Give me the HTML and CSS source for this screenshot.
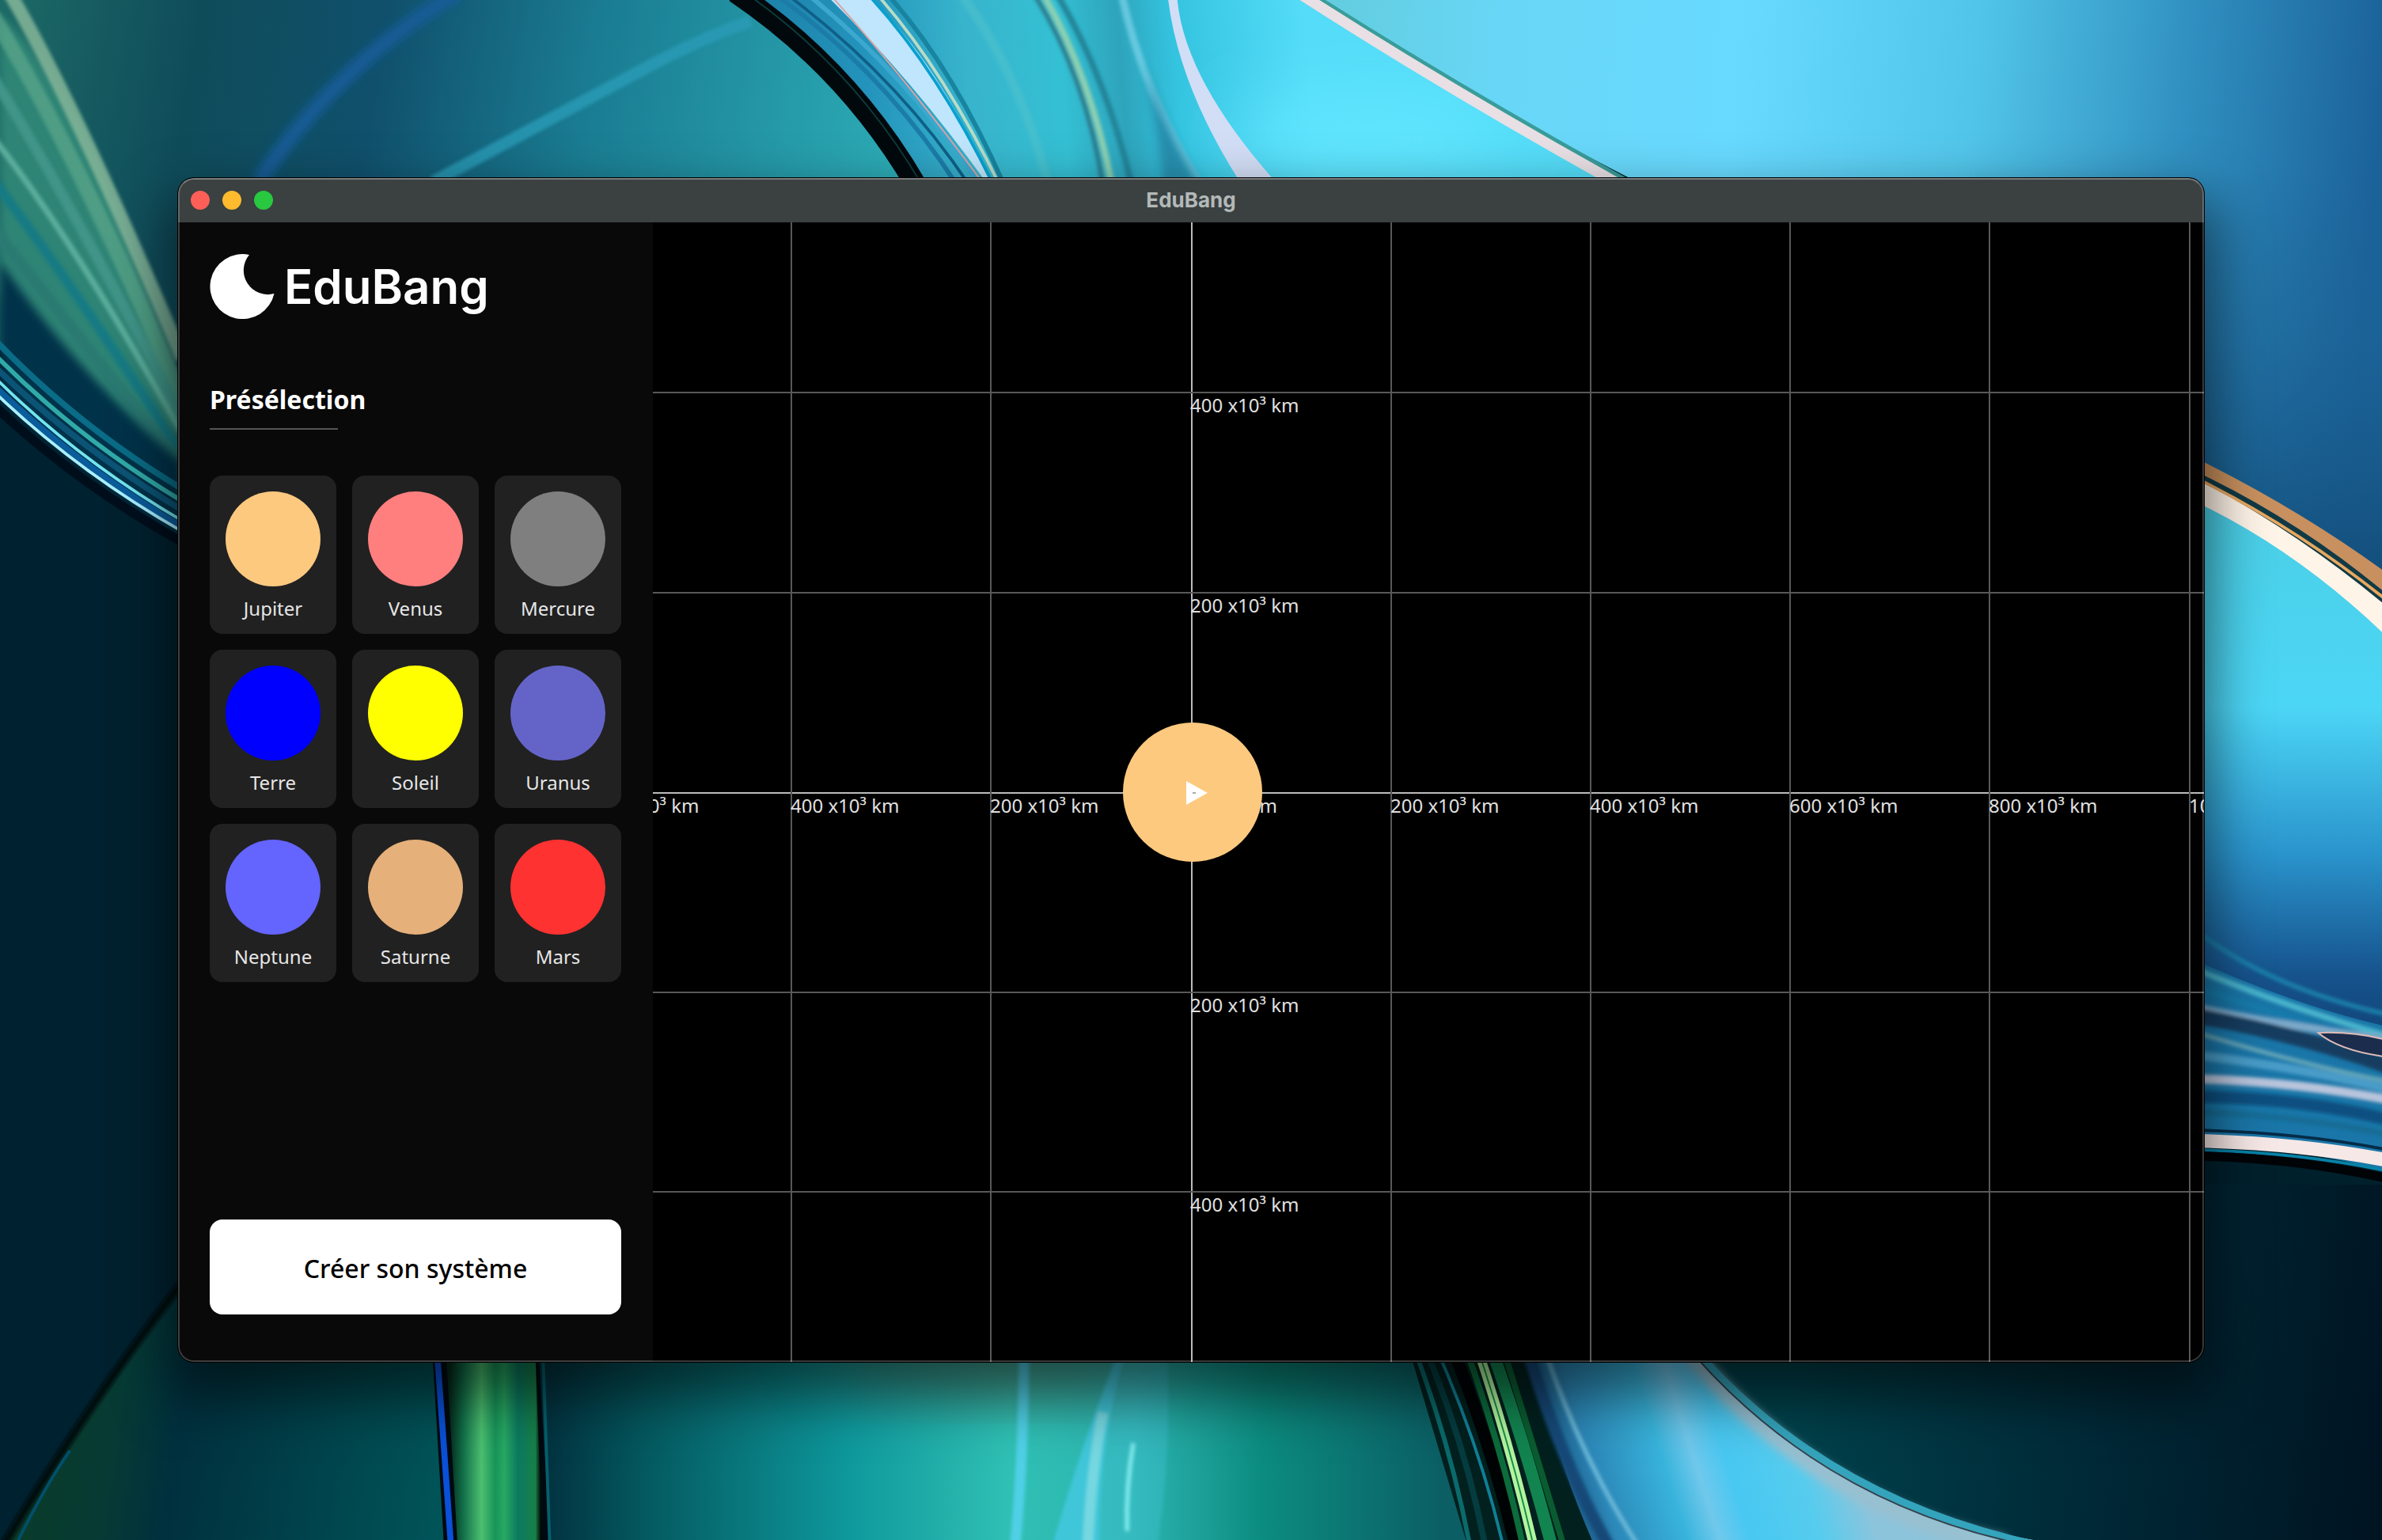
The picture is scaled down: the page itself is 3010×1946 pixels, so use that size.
FILE: index.html
```html
<!DOCTYPE html>
<html lang="fr">
<head>
<meta charset="utf-8">
<title>EduBang</title>
<link rel="stylesheet" href="styles.css">
</head>
<body>
<svg class="wallpaper" viewBox="0 0 1568 1014" preserveAspectRatio="xMidYMid slice" aria-hidden="true">
  <defs>
    <filter id="b1" x="-20%" y="-20%" width="140%" height="140%"><feGaussianBlur stdDeviation="1"/></filter>
    <filter id="b3" x="-30%" y="-30%" width="160%" height="160%"><feGaussianBlur stdDeviation="3"/></filter>
    <filter id="b20" x="-60%" y="-60%" width="220%" height="220%"><feGaussianBlur stdDeviation="24"/></filter>
    <linearGradient id="topLeft" x1="0" y1="0" x2="1" y2="0.1">
      <stop offset="0" stop-color="#1d6a66"/><stop offset="0.22" stop-color="#0f4c5a"/><stop offset="0.42" stop-color="#10506c"/>
      <stop offset="0.65" stop-color="#1a7c92"/><stop offset="1" stop-color="#2cacb6"/>
    </linearGradient>
    <linearGradient id="sky" gradientUnits="userSpaceOnUse" x1="860" y1="0" x2="1568" y2="60">
      <stop offset="0" stop-color="#62ccdc"/><stop offset="0.18" stop-color="#68d6f6"/><stop offset="0.4" stop-color="#68daff"/>
      <stop offset="0.62" stop-color="#52c6ea"/><stop offset="0.82" stop-color="#3090c0"/><stop offset="1" stop-color="#1b629a"/>
    </linearGradient>
    <linearGradient id="skyDown" gradientUnits="userSpaceOnUse" x1="0" y1="110" x2="0" y2="400">
      <stop offset="0" stop-color="#1b6294" stop-opacity="0"/><stop offset="0.4" stop-color="#1b6294" stop-opacity="0.5"/><stop offset="1" stop-color="#114a76"/>
    </linearGradient>
    <linearGradient id="fold" x1="0" y1="0" x2="0" y2="1">
      <stop offset="0" stop-color="#4acde2"/><stop offset="0.42" stop-color="#4cd6f6"/><stop offset="0.68" stop-color="#2a94cc"/>
      <stop offset="0.9" stop-color="#16528c"/><stop offset="1" stop-color="#12467a"/>
    </linearGradient>
    <linearGradient id="floorLeft" gradientUnits="userSpaceOnUse" x1="20" y1="950" x2="290" y2="990">
      <stop offset="0" stop-color="#0a3c2a"/><stop offset="0.2" stop-color="#063a34"/><stop offset="0.35" stop-color="#00303e"/><stop offset="1" stop-color="#005458"/>
    </linearGradient>
    <linearGradient id="floor" gradientUnits="userSpaceOnUse" x1="355" y1="0" x2="950" y2="0">
      <stop offset="0" stop-color="#02303e"/><stop offset="0.12" stop-color="#045a60"/><stop offset="0.34" stop-color="#0e989c"/>
      <stop offset="0.52" stop-color="#30c0b4"/><stop offset="0.66" stop-color="#2cb4b0"/><stop offset="0.8" stop-color="#0c8c80"/><stop offset="1" stop-color="#0b5e64"/>
    </linearGradient>
    <linearGradient id="greenBand" gradientUnits="userSpaceOnUse" x1="296" y1="0" x2="356" y2="0">
      <stop offset="0" stop-color="#052c1c"/><stop offset="0.15" stop-color="#12704a"/><stop offset="0.35" stop-color="#4cc070"/>
      <stop offset="0.5" stop-color="#18945a"/><stop offset="0.6" stop-color="#28a862"/><stop offset="0.75" stop-color="#0b7a60"/><stop offset="0.94" stop-color="#178048"/><stop offset="1" stop-color="#000806"/>
    </linearGradient>
    <linearGradient id="blueFold" gradientUnits="userSpaceOnUse" x1="1020" y1="990" x2="1210" y2="930">
      <stop offset="0" stop-color="#123e68"/><stop offset="0.18" stop-color="#2c88b8"/><stop offset="0.4" stop-color="#38b4dc"/>
      <stop offset="0.5" stop-color="#70c8ec"/><stop offset="0.6" stop-color="#48c8f2"/><stop offset="0.82" stop-color="#56ccee"/><stop offset="1" stop-color="#8cc4dc"/>
    </linearGradient>
    <linearGradient id="darkCorner" gradientUnits="userSpaceOnUse" x1="1180" y1="900" x2="1568" y2="960">
      <stop offset="0" stop-color="#00424c"/><stop offset="0.5" stop-color="#002a38"/><stop offset="1" stop-color="#001422"/>
    </linearGradient>
    <linearGradient id="ribbon" gradientUnits="userSpaceOnUse" x1="500" y1="60" x2="860" y2="30">
      <stop offset="0" stop-color="#1c80a8"/><stop offset="0.2" stop-color="#2494bc"/><stop offset="0.38" stop-color="#38b4cc"/>
      <stop offset="0.55" stop-color="#34c0d4"/><stop offset="0.66" stop-color="#2ea4bc"/><stop offset="0.76" stop-color="#34c4e0"/><stop offset="1" stop-color="#54dcf8"/>
    </linearGradient>
  </defs>

  <rect width="1568" height="1014" fill="#00212f"/>
  <path d="M0 0H490Q558 45 605 116V200H118V350Q50 310 0 230Z" fill="url(#topLeft)"/>
  <path d="M0 10Q60 60 118 260V330Q40 270 0 190Z" fill="#2f8474" filter="url(#b3)"/>
  <g fill="none" filter="url(#b1)">
    <path d="M6 -5Q50 70 120 236" stroke="#8cbc9c" stroke-width="9" opacity="0.8"/>
    <path d="M-5 10Q50 100 120 262" stroke="#5ba88a" stroke-width="10" opacity="0.7"/>
    <path d="M-5 50Q50 140 120 275" stroke="#3f9488" stroke-width="7"/>
    <path d="M-5 90Q50 160 120 286" stroke="#5cae9c" stroke-width="4"/>
    <path d="M-5 118Q50 190 120 300" stroke="#187a84" stroke-width="6"/>
    <path d="M-5 150Q50 220 120 308" stroke="#2c7a72" stroke-width="8"/>
  </g>
  <path d="M0 172Q50 245 120 305V356Q50 305 0 262Z" fill="#04304a" filter="url(#b3)"/>
  <g fill="none">
    <path d="M-5 222Q50 280 120 322" stroke="#0a6c86" stroke-width="4"/>
    <path d="M-5 232Q50 288 120 330" stroke="#30aaa8" stroke-width="3"/>
    <path d="M-5 240Q50 294 120 336" stroke="#0c5476" stroke-width="4"/>
    <path d="M-5 247Q50 302 120 343" stroke="#72e4f0" stroke-width="2"/>
    <path d="M-5 253Q50 306 120 347" stroke="#0a5c9c" stroke-width="4"/>
    <path d="M-5 257Q50 310 120 350" stroke="#a8f0ff" stroke-width="2"/>
    <path d="M-5 266Q50 318 120 357" stroke="#000e1c" stroke-width="6"/>
  </g>
  <path d="M302 -5Q222 42 170 120" fill="none" stroke="#175c96" stroke-width="10" filter="url(#b3)"/>
  <path d="M285 120L423 46Q460 26 494 14" fill="none" stroke="#2a9cb8" stroke-width="8" opacity="0.8" filter="url(#b1)"/>

  <path d="M492 0H860Q965 62 1075 120H605Q562 48 492 0Z" fill="url(#ribbon)"/>
  <ellipse cx="900" cy="92" rx="90" ry="30" fill="#62e6ff" filter="url(#b20)"/>
  <g fill="none">
    <path d="M484 -5Q558 45 603 122" stroke="#02090d" stroke-width="14"/>
    <path d="M490 -5Q562 45 607 122" stroke="#0d3c3c" stroke-width="1"/>
    <path d="M508 -5Q580 45 630 122" stroke="#1c7ca8" stroke-width="3"/>
    <path d="M516 -5Q590 50 638 122" stroke="#0f5f88" stroke-width="2"/>
    <path d="M530 -5Q598 50 645 122" stroke="#3ca8d0" stroke-width="3"/>
  </g>
  <path d="M547 0H574Q618 42 652 120H649Q600 52 547 0Z" fill="#bfe6fc"/>
  <g fill="none">
    <path d="M545 -5Q598 54 648 122" stroke="#d8a4a4" stroke-width="1"/>
    <path d="M570 -5Q616 44 654 122" stroke="#08a0d0" stroke-width="2"/>
    <path d="M576 -5Q620 44 658 122" stroke="#b8dcc8" stroke-width="2"/>
    <path d="M583 -5Q627 44 661 122" stroke="#1884a0" stroke-width="3"/>
  </g>
  <g fill="none" filter="url(#b1)">
    <path d="M632 -5Q672 50 690 122" stroke="#54c4cc" stroke-width="6" opacity="0.5"/>
    <path d="M680 -5Q715 50 726 122" stroke="#2c7c8c" stroke-width="3"/>
    <path d="M686 -5Q718 50 732 122" stroke="#8fd0b0" stroke-width="4"/>
    <path d="M695 -5Q728 50 745 122" stroke="#248498" stroke-width="4"/>
    <path d="M738 -5Q752 60 790 122" stroke="#7cd4ea" stroke-width="5" opacity="0.7"/>
  </g>
  <path d="M752 40Q770 90 792 125H766Q762 80 752 40Z" fill="#247c9c" opacity="0.7" filter="url(#b3)"/>
  <path d="M769 0H775Q780 52 838 118H815Q776 56 769 0Z" fill="#d2def6"/>
  <path d="M860 0H1568V420H1300V118H1074Q965 62 860 0Z" fill="url(#sky)"/>
  <rect x="1300" y="110" width="268" height="310" fill="url(#skyDown)"/>
  <path d="M856 -5Q955 58 1070 122" fill="none" stroke="#3a9c9a" stroke-width="9"/>
  <path d="M854 -5Q952 58 1067 122" fill="none" stroke="#e8e0e4" stroke-width="7"/>

  <path d="M1440 310Q1510 345 1568 412V680H1440Z" fill="url(#fold)"/>
  <path d="M1440 299Q1512 334 1572 378V392Q1510 340 1440 308Z" fill="#c8905e"/>
  <path d="M1440 308Q1510 340 1572 392V402Q1510 350 1440 314Z" fill="#123a44"/>
  <path d="M1440 312Q1510 348 1572 400V420Q1510 360 1440 328Z" fill="#fff4e8"/>
  <path d="M1440 312Q1510 346 1572 396" fill="none" stroke="#e8a860" stroke-width="2"/>

  <path d="M1440 630Q1510 662 1572 676V776Q1510 752 1440 752Z" fill="#1a76a8"/>
  <g fill="none" filter="url(#b1)">
    <path d="M1440 608Q1490 650 1572 668" stroke="#1a80aa" stroke-width="3"/>
    <path d="M1440 636Q1510 665 1572 682" stroke="#48b4cc" stroke-width="4"/>
    <path d="M1440 648Q1510 672 1572 690" stroke="#147cac" stroke-width="4"/>
    <path d="M1440 662Q1500 675 1572 684" stroke="#7ca8c8" stroke-width="5"/>
    <path d="M1440 668Q1510 680 1572 702" stroke="#153c60" stroke-width="10"/>
    <path d="M1440 678Q1510 700 1572 712" stroke="#64a4b8" stroke-width="3"/>
    <path d="M1440 694Q1510 702 1572 717" stroke="#4a9cc8" stroke-width="6"/>
    <path d="M1440 710Q1510 712 1572 724" stroke="#b8c4dc" stroke-width="6"/>
    <path d="M1440 722Q1510 722 1572 737" stroke="#075080" stroke-width="8"/>
    <path d="M1440 732Q1510 734 1572 747" stroke="#186c94" stroke-width="4"/>
  </g>
  <path d="M1526 680Q1550 679 1572 685V696Q1540 692 1526 680Z" fill="#1c2c4c" stroke="#e0bcb8" stroke-width="1"/>
  <path d="M1440 755Q1520 755 1572 772V1014H1440Z" fill="#00202c"/>
  <path d="M1440 751Q1510 752 1572 764" fill="none" stroke="#f6e8e6" stroke-width="9"/>
  <path d="M1440 744Q1510 745 1572 757" fill="none" stroke="#052c48" stroke-width="2"/>
  <path d="M1440 757Q1510 758 1572 771" fill="none" stroke="#0882a8" stroke-width="2"/>
  <path d="M1440 761Q1510 762 1572 776" fill="none" stroke="#000407" stroke-width="6"/>

  <path d="M118 847Q60 920 5 1014H300V880H118Z" fill="url(#floorLeft)"/>
  <path d="M122 842Q62 918 2 1018" fill="none" stroke="#000a10" stroke-width="5" filter="url(#b1)"/>
  <path d="M12 1014Q30 978 46 955" fill="none" stroke="#00506c" stroke-width="2"/>
  <rect x="354" y="880" width="640" height="134" fill="url(#floor)"/>
  <ellipse cx="650" cy="884" rx="110" ry="24" fill="#5a8470" opacity="0.7" filter="url(#b20)"/>
  <path d="M284 880L292 1014H362L354 880Z" fill="#000a10"/>
  <path d="M293 880L301 1014H357L352 880Z" fill="url(#greenBand)"/>
  <path d="M287 880L297 1020" stroke="#0a50d8" stroke-width="4"/>
  <path d="M357 880L362 1020" stroke="#04606c" stroke-width="2"/>
  <g fill="none" filter="url(#b1)">
    <path d="M674 880Q674 960 668 1020" stroke="#50d0e6" stroke-width="7"/>
    <path d="M740 880Q712 950 692 1020H762Q772 950 768 880Z" fill="#44c8e0" opacity="0.3"/>
    <path d="M740 880Q712 950 692 1020H724Q722 950 744 880Z" fill="#44c8e0" opacity="0.8"/>
    <path d="M726 930Q718 970 716 1020" stroke="#8ce0e4" stroke-width="7" opacity="0.7"/>
    <path d="M746 950Q741 980 742 1008" stroke="#7ce8ec" stroke-width="3"/>
  </g>
  <path d="M925 880L965 1014H1060L1000 880Z" fill="#02201e"/>
  <g fill="none">
    <path d="M928 880Q955 950 968 1020" stroke="#0a6a6c" stroke-width="3"/>
    <path d="M935 880Q965 950 978 1020" stroke="#053c40" stroke-width="4"/>
    <path d="M942 880Q974 950 990 1020" stroke="#108098" stroke-width="2"/>
    <path d="M953 880Q982 950 998 1020" stroke="#000304" stroke-width="8"/>
    <path d="M962 880Q988 950 1003 1020" stroke="#0c6c3c" stroke-width="4"/>
    <path d="M970 880Q994 950 1010 1020" stroke="#b4f4a0" stroke-width="6"/>
    <path d="M970 880Q994 950 1010 1020" stroke="#168c48" stroke-width="1"/>
    <path d="M979 880Q1004 950 1022 1020" stroke="#128450" stroke-width="8"/>
    <path d="M987 880Q1009 950 1030 1020" stroke="#0a5c30" stroke-width="4"/>
  </g>
  <path d="M1008 880Q1020 950 1048 1014H1340Q1200 990 1108 880Z" fill="url(#blueFold)"/>
  <path d="M1108 880Q1200 990 1340 1014H1568V780H1440V880Z" fill="url(#darkCorner)"/>
  <g fill="none">
    <path d="M1014 880Q1040 960 1080 1020" stroke="#6ab8d8" stroke-width="3" filter="url(#b1)"/>
    <path d="M1003 880Q1026 960 1060 1020" stroke="#154a78" stroke-width="8" filter="url(#b1)"/>
    <path d="M1104 880Q1190 990 1320 1018" stroke="#98c0d0" stroke-width="12" filter="url(#b3)"/>
    <path d="M1108 880Q1198 988 1345 1018" stroke="#34a4bc" stroke-width="5"/>
    <path d="M1105 880Q1195 990 1338 1018" stroke="#34404a" stroke-width="1"/>
  </g>
</svg>

<main class="window">
  <header class="titlebar">
    <div class="lights">
      <button class="light light-close" aria-label="Fermer"></button>
      <button class="light light-min" aria-label="Réduire"></button>
      <button class="light light-zoom" aria-label="Agrandir"></button>
    </div>
    <span class="title">EduBang</span>
  </header>
  <div class="content">
    <aside class="sidebar">
      <div class="logo">
        <svg class="moon" viewBox="0 0 82 82" aria-hidden="true"><path d="M50 1A41 41 0 1 0 81.500 50A30.500 30.500 0 0 1 50 1Z" fill="#fff"/></svg>
        <h1 class="brand">EduBang</h1>
      </div>
      <h2 class="heading">Présélection</h2>
      <div class="planets">
        <button class="card"><span class="disc jupiter"></span>Jupiter</button>
        <button class="card"><span class="disc venus"></span>Venus</button>
        <button class="card"><span class="disc mercure"></span>Mercure</button>
        <button class="card"><span class="disc terre"></span>Terre</button>
        <button class="card"><span class="disc soleil"></span>Soleil</button>
        <button class="card"><span class="disc uranus"></span>Uranus</button>
        <button class="card"><span class="disc neptune"></span>Neptune</button>
        <button class="card"><span class="disc saturne"></span>Saturne</button>
        <button class="card"><span class="disc mars"></span>Mars</button>
      </div>
      <button class="create">Créer son système</button>
    </aside>
    <section class="space" aria-label="Simulation">
      <svg class="plot" width="2" height="2">
        <g class="axis"><path d="M-2000 1H4000M1 -2000V2000"/></g>
        <g class="grid">
          <path d="M-758 -2000V2000M-505 -2000V2000M-253 -2000V2000M253 -2000V2000M505 -2000V2000M757 -2000V2000M1009 -2000V2000M1262 -2000V2000"/>
          <path d="M-2000 -505H4000M-2000 -252H4000M-2000 253H4000M-2000 505H4000"/>
        </g>
        <g class="scale">
          <text x="-759" y="26">600 x10³ km</text>
          <text x="-506" y="26">400 x10³ km</text>
          <text x="-254" y="26">200 x10³ km</text>
          <text x="-1" y="26">0 x10³ km</text>
          <text x="252" y="26">200 x10³ km</text>
          <text x="504" y="26">400 x10³ km</text>
          <text x="756" y="26">600 x10³ km</text>
          <text x="1008" y="26">800 x10³ km</text>
          <text x="1261" y="26">1000 x10³ km</text>
          <text x="-1" y="-480">400 x10³ km</text>
          <text x="-1" y="-227">200 x10³ km</text>
          <text x="-1" y="278">200 x10³ km</text>
          <text x="-1" y="530">400 x10³ km</text>
        </g>
        <circle cx="2" cy="0" r="88" fill="#fdc97f"/>
        <path d="M-6 -14L21 1L-6 16Z" fill="#fff"/>
        <rect x="2" y="0" width="4" height="2" fill="#aaa"/>
      </svg>
    </section>
  </div>
</main>
</body>
</html>
```
FILE: styles.css
```css
* {
  box-sizing: border-box;
}

body {
  margin: 0;
  min-height: 100vh;
  padding: 225px;
  display: flex;
  position: relative;
  overflow: hidden;
  background: #00212f;
  font-family: "Noto Sans", "Open Sans", sans-serif;
  color: #fff;
}

button {
  margin: 0;
  padding: 0;
  border: 0;
  font: inherit;
  color: inherit;
}

.wallpaper {
  position: absolute;
  inset: 0;
  width: 100%;
  height: 100%;
}

.window {
  position: relative;
  flex: 1;
  display: flex;
  flex-direction: column;
  border-radius: 20px;
  overflow: hidden;
  background: #000;
  box-shadow: 0 0 0 1px #000, 0 36px 70px 10px rgba(0, 0, 0, 0.55);
}

.window::after {
  content: "";
  position: absolute;
  inset: 0;
  border: 2px solid rgba(255, 255, 255, 0.22);
  border-top-color: rgba(255, 255, 255, 0.32);
  border-radius: 20px;
  pointer-events: none;
}

.titlebar {
  height: 56px;
  padding: 0 16px;
  display: grid;
  grid-template-columns: 1fr auto 1fr;
  align-items: center;
  background: #3b4040;
}

.lights {
  display: flex;
  gap: 16px;
}

.light {
  width: 24px;
  height: 24px;
  border-radius: 50%;
}

.light-close { background: #ff5f57; }
.light-min { background: #ffbb2e; }
.light-zoom { background: #28c840; }

.title {
  font: 700 26px/32px Inter, "Liberation Sans", sans-serif;
  color: #b3b9b9;
}

.content {
  flex: 1;
  display: flex;
}

.sidebar {
  flex: none;
  width: 600px;
  padding: 40px 40px 60px;
  display: flex;
  flex-direction: column;
  background: #090909;
}

.logo {
  display: flex;
  align-items: center;
  gap: 12px;
}

.moon {
  width: 82px;
  height: 82px;
}

.brand {
  margin: 0;
  font: 600 60px/76px Inter, "Liberation Sans", sans-serif;
}

.heading {
  margin: 80px 0 58px;
  font-size: 32px;
  line-height: 44px;
  font-weight: 700;
}

.heading::after {
  content: "";
  display: block;
  width: 162px;
  height: 2px;
  margin-top: 14px;
  background: #555;
}

.planets {
  display: grid;
  grid-template-columns: repeat(3, 1fr);
  gap: 20px;
}

.card {
  height: 200px;
  padding: 20px 20px 16px;
  display: flex;
  flex-direction: column;
  align-items: center;
  gap: 12px;
  border-radius: 16px;
  background: #212121;
  font-size: 24px;
  line-height: 32px;
  color: #e6e6e6;
}

.disc {
  width: 120px;
  height: 120px;
  border-radius: 50%;
}

.jupiter { background: #fdc97f; }
.venus { background: #ff7f7f; }
.mercure { background: #7f7f7f; }
.terre { background: #0000ff; }
.soleil { background: #ffff00; }
.uranus { background: #6464c8; }
.neptune { background: #6464ff; }
.saturne { background: #e6b07a; }
.mars { background: #ff3232; }

.create {
  height: 120px;
  margin-top: auto;
  padding-top: 4px;
  border-radius: 16px;
  background: #fff;
  font-size: 32px;
  line-height: 44px;
  font-weight: 500;
  color: #000;
}

.space {
  flex: 1;
  position: relative;
  overflow: hidden;
  background: #000;
}

/* The origin of the plot is the middle of the whole window, sidebar included. */
.plot {
  position: absolute;
  left: calc(50% - 300px);
  top: 50%;
  overflow: visible;
}

.axis {
  stroke: #bcbcbc;
  stroke-width: 2;
}

.grid {
  stroke: #585858;
  stroke-width: 2;
}

.scale {
  font-size: 24px;
  fill: #e0e0e0;
}
```
